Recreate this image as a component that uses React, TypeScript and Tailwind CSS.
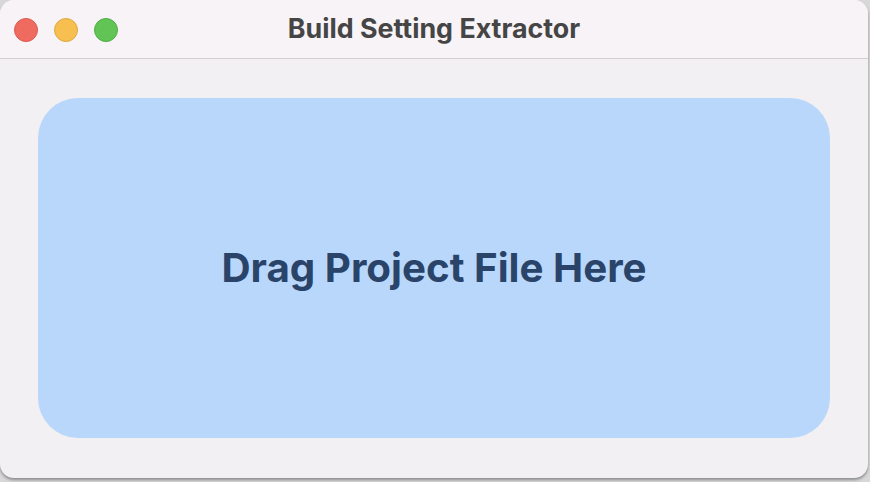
import React from 'react';

const TrafficLight: React.FC<{ className: string }> = ({ className }) => (
  <span className={`block h-[24px] w-[24px] rounded-full border ${className}`} />
);

export default function App() {
  return (
    <div className="h-[482px] w-[870px] bg-[#d8d8d8] font-['Inter','Liberation_Sans',sans-serif]">
      <div className="flex h-[478px] w-[868px] flex-col overflow-hidden rounded-[14px] bg-[#f2f0f3] shadow-[0_2px_3px_rgba(0,0,0,0.35)]">
        <div className="relative flex h-[59px] shrink-0 items-center justify-center border-b border-[#d2d0d3] bg-[#f7f3f7]">
          <div className="absolute left-[14px] top-[18px] flex gap-[16px]">
            <TrafficLight className="border-[#dc5a52] bg-[#ef6b5f]" />
            <TrafficLight className="border-[#dfa93f] bg-[#f6bf50]" />
            <TrafficLight className="border-[#51ad46] bg-[#61c454]" />
          </div>
          <h1 className="pb-[1px] text-[26.8px] font-bold text-[#454545]">
            Build Setting Extractor
          </h1>
        </div>
        <div className="flex flex-1 px-[38px] pb-[40px] pt-[39px]">
          <div className="flex flex-1 items-center justify-center rounded-[40px] bg-[#b9d7fb]">
            <p className="text-[40.3px] font-bold text-[#2a4469]">
              Drag Project File Here
            </p>
          </div>
        </div>
      </div>
    </div>
  );
}
